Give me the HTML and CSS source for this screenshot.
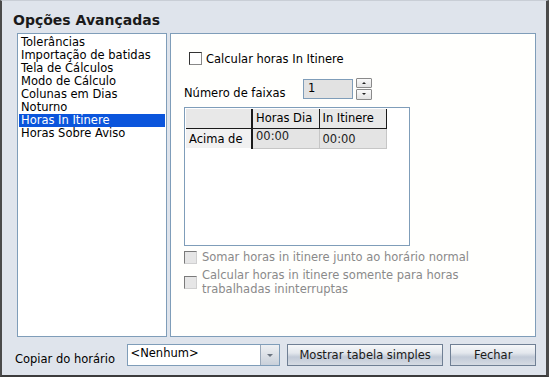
FILE: index.html
```html
<!DOCTYPE html>
<html lang="pt">
<head>
  <meta charset="UTF-8">
  <title>Opções Avançadas</title>
  <link rel="stylesheet" href="styles.css">
</head>
<body>
<div class="window">
  <h1 class="title">Opções Avançadas</h1>

  <div class="panels">
    <ul class="menu">
      <li>Tolerâncias</li>
      <li>Importação de batidas</li>
      <li>Tela de Cálculos</li>
      <li>Modo de Cálculo</li>
      <li>Colunas em Dias</li>
      <li>Noturno</li>
      <li class="selected">Horas In Itinere</li>
      <li>Horas Sobre Aviso</li>
    </ul>

    <div class="content">
      <label class="check-row main-check">
        <span class="box"></span>
        <span>Calcular horas In Itinere</span>
      </label>

      <div class="number-row">
        <span class="number-label">Número de faixas</span>
        <div class="number-input">1</div>
        <div class="spinner">
          <button class="spin up"></button>
          <button class="spin down"></button>
        </div>
      </div>

      <div class="grid">
        <table>
          <tr class="head">
            <th class="corner"></th>
            <th>Horas Dia</th>
            <th>In Itinere</th>
          </tr>
          <tr>
            <th class="row-head">Acima de</th>
            <td>00:00</td>
            <td class="low">00:00</td>
          </tr>
        </table>
      </div>

      <label class="check-row disabled first">
        <span class="box"></span>
        <span>Somar horas in itinere junto ao horário normal</span>
      </label>
      <label class="check-row disabled">
        <span class="box"></span>
        <span>Calcular horas in itinere somente para horas<br>trabalhadas ininterruptas</span>
      </label>
    </div>
  </div>

  <div class="footer">
    <span class="footer-label">Copiar do horário</span>
    <div class="combo">
      <span class="combo-text">&lt;Nenhum&gt;</span>
      <span class="combo-arrow"></span>
    </div>
    <button class="btn wide">Mostrar tabela simples</button>
    <button class="btn">Fechar</button>
  </div>
</div>
</body>
</html>
```

FILE: styles.css
```css
body {
  margin: 0;
  font-family: "DejaVu Sans", Verdana, sans-serif;
  font-size: 11.5px;
  color: #000;
}
.window {
  box-sizing: border-box;
  width: 549px;
  height: 377px;
  background-color: #dfe4ec;
  border-top: 1px solid #c9ced6;
  border-left: 2px solid #4a4a4a;
  border-right: 3px solid #4a4a4a;
  border-bottom: 2px solid #3c3c3c;
  padding: 0 10px 0 11px;
}
.title {
  box-sizing: border-box;
  height: 32px;
  margin: 0;
  padding-top: 10px;
  font-size: 14px;
  line-height: 18px;
  font-weight: bold;
  color: #1a1a1a;
}
.panels {
  display: flex;
  gap: 3px;
  height: 304px;
  margin-left: 4px;
}
.menu {
  box-sizing: border-box;
  width: 150px;
  margin: 0;
  padding: 2px 0 0;
  list-style: none;
  background-color: #fff;
  border: 1px solid #7f9db9;
}
.menu li {
  height: 13px;
  line-height: 13px;
  margin: 0 1px;
  padding-left: 2px;
  white-space: nowrap;
}
.menu li.selected {
  background-color: #0b55dc;
  color: #fff;
}
.content {
  flex: 1;
  box-sizing: border-box;
  background-color: #fffffd;
  border: 1px solid #7f9db9;
  padding: 18px 0 0 13px;
}

/* checkboxes */
.check-row {
  display: flex;
  align-items: center;
  gap: 5px;
  line-height: 14px;
}
.main-check {
  margin-left: 5px;
  gap: 4px;
  height: 13px;
}
.box {
  box-sizing: border-box;
  flex: none;
  width: 13px;
  height: 13px;
  background-color: #fff;
  border: 1px solid #333;
  border-right-color: #888;
  border-bottom-color: #888;
}
.check-row.disabled {
  color: #8a8a8a;
  margin-top: 4px;
}
.check-row.disabled.first {
  margin-top: 4px;
}
.check-row.disabled .box {
  background-color: #e6e6e6;
  border-color: #7a7a7a #d0d0d0 #d0d0d0 #7a7a7a;
}

/* spinner */
.number-row {
  display: flex;
  margin-top: 13px;
  height: 22px;
}
.number-label {
  width: 119px;
  margin-top: 9px;
  line-height: 13px;
}
.number-input {
  box-sizing: border-box;
  width: 50px;
  height: 20px;
  margin-top: 1px;
  padding: 2px 0 0 4px;
  background-color: #e2e2e2;
  border: 1px solid #7f9db9;
  line-height: 13px;
}
.spinner {
  display: flex;
  flex-direction: column;
  gap: 1px;
  margin-left: 3px;
}
.spin {
  position: relative;
  width: 16px;
  height: 10px;
  padding: 0;
  background: linear-gradient(#fafafa, #e2e2e2);
  border: 1px solid #8a8a8a;
  border-radius: 1px;
}
.spin.down {
  height: 11px;
}
.spin::after {
  content: "";
  position: absolute;
  left: 5px;
  top: 3px;
  border-left: 2px solid transparent;
  border-right: 2px solid transparent;
}
.spin.up::after {
  border-bottom: 2px solid #222;
}
.spin.down::after {
  border-top: 2px solid #222;
}

/* grid */
.grid {
  box-sizing: border-box;
  width: 226px;
  height: 139px;
  margin-top: 7px;
  padding: 1px;
  background-color: #fff;
  border: 1px solid #7f9db9;
}
.grid table {
  border-collapse: collapse;
}
.grid th,
.grid td {
  box-sizing: border-box;
  padding: 0 3px;
  text-align: left;
  font-weight: normal;
  white-space: nowrap;
  height: 19px;
  line-height: 13px;
}
.grid .head th {
  background-color: #e8e8e8;
  border-right: 1px solid #1a1a1a;
  border-bottom: 1px solid #1a1a1a;
  width: 67px;
}
.grid .head th.corner {
  width: 66px;
  border-right-width: 2px;
}
.grid .row-head {
  background-color: #f1f1f1;
  border-right: 2px solid #1a1a1a;
  height: 20px;
  padding-top: 3px;
}
.grid td {
  background-color: #e4e4e4;
  border: 1px solid #c6c6c6;
  color: #222;
  vertical-align: top;
  padding-top: 1px;
}
.grid td.low {
  padding-top: 4px;
}

/* footer */
.footer {
  display: flex;
  align-items: flex-start;
  margin-top: 7px;
  padding-left: 2px;
}
.footer-label {
  width: 112px;
  margin-top: 9px;
  line-height: 13px;
}
.combo {
  box-sizing: border-box;
  display: flex;
  width: 154px;
  height: 22px;
  background-color: #fff;
  border: 1px solid #7f9db9;
}
.combo-text {
  flex: 1;
  padding: 2px 0 0 3px;
  line-height: 13px;
}
.combo-arrow {
  position: relative;
  width: 18px;
  background: linear-gradient(#eef0f3, #c9d0da);
  border-left: 1px solid #9aa8b9;
}
.combo-arrow::after {
  content: "";
  position: absolute;
  left: 6px;
  top: 9px;
  border-left: 3px solid transparent;
  border-right: 3px solid transparent;
  border-top: 3px solid #6b7480;
}
.btn {
  box-sizing: border-box;
  width: 86px;
  height: 22px;
  margin-left: 7px;
  padding: 0;
  font-family: inherit;
  font-size: 11.5px;
  color: #1a1a1a;
  border: 1px solid #6f7f94;
  background: linear-gradient(#f6f7f9, #e3e7ed 40%, #c2cad7 60%, #d6dbe3);
}
.btn.wide {
  width: 157px;
}
```
